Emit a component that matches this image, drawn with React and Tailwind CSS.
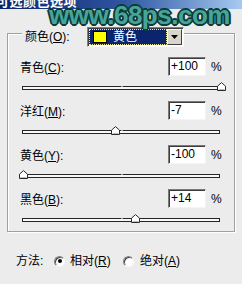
const font = "font-['Liberation_Sans','Noto_Sans_CJK_SC',sans-serif]"

const rows = [
  { label: '青色', key: 'C', value: '+100', pos: 100 },
  { label: '洋红', key: 'M', value: '-7', pos: -7 },
  { label: '黄色', key: 'Y', value: '-100', pos: -100 },
  { label: '黑色', key: 'B', value: '+14', pos: 14 },
]

function Label({ text, k }) {
  return (
    <span className="text-[12px] leading-[14px] text-black whitespace-nowrap">
      {text}(<span className="underline underline-offset-[1px]">{k}</span>):
    </span>
  )
}

function Thumb({ left }) {
  return (
    <svg
      width="9"
      height="9"
      viewBox="0 0 9 9"
      className="absolute top-[-5px]"
      style={{ left }}
    >
      <path d="M0.5 8.5V4.2L4.5 0.6L8.5 4.2V8.5Z" fill="#fff" stroke="#2a2a2a" />
      <path d="M1.5 7.5H7.5" stroke="#bdbdbd" />
    </svg>
  )
}

function Row({ row, first }) {
  const left = ((row.pos + 100) / 200) * 198 - 4.5
  return (
    <div className={first ? 'mt-[10px]' : 'mt-[11px]'}>
      <div className="flex items-center h-[19px] pl-[12px]">
        <div className="flex-1">
          <Label text={row.label} k={row.key} />
        </div>
        <div className="w-[38px] h-[19px] bg-white border-t border-l border-[#7a7a7a] border-r border-b border-r-[#f4f4f4] border-b-[#f4f4f4] shadow-[inset_1px_1px_0_#3c3c3c] pl-[2px] text-[12px] leading-[17px] text-black">
          {row.value}
        </div>
        <div className="w-[28px] pl-[5px] text-[12px] leading-[14px] text-black">%</div>
      </div>
      <div className="relative ml-[14px] mt-[10px] w-[198px] h-[4px] border border-[#262626] bg-[#f8f8f8]">
        <div className="absolute left-[98px] top-[-1px] w-[2px] h-[1px] bg-[#9a9a9a]" />
        <Thumb left={left} />
      </div>
    </div>
  )
}

function Radio({ on }) {
  return (
    <span className="relative w-[11px] h-[11px] rounded-full bg-white border border-t-[#808080] border-l-[#808080] border-r-[#f6f6f6] border-b-[#f6f6f6] shadow-[inset_1px_1px_0_#404040] flex items-center justify-center">
      {on && <span className="w-[4px] h-[4px] rounded-full bg-black" />}
    </span>
  )
}

export default function App() {
  return (
    <div className={`relative w-[242px] h-[284px] overflow-hidden bg-[#ececec] ${font}`}>
      {/* title bar */}
      <div className="h-[9px] overflow-hidden bg-gradient-to-r from-[#0a246a] via-[#2f54a0] to-[#a6caf0]">
        <div className="-mt-[6px] -ml-[4px] text-[13px] leading-[15px] font-bold text-white tracking-[0.5px]">
          可选颜色选项
        </div>
      </div>

      {/* watermark */}
      <div className="absolute left-[49px] top-[0px] text-[26px] leading-[30px] font-bold tracking-[-0.5px] text-[#46a59a] font-['Liberation_Sans',sans-serif] [text-shadow:1px_1px_0_#0d3b36,-1px_-1px_0_#0d3b36,1px_-1px_0_#0d3b36,-1px_1px_0_#0d3b36,2px_0_0_#0d3b36,-2px_0_0_#0d3b36,0_2px_0_#0d3b36,0_-2px_0_#0d3b36]">
        www.68ps.com
      </div>

      {/* group box */}
      <div className="mt-[24px] mx-[7px] h-[199px] border border-[#a0a0a0] shadow-[inset_1px_1px_0_#fff,1px_1px_0_#fff]">
        <div className="-mt-[7px] flex items-center h-[20px] pl-[14px]">
          <div className="w-[65px] bg-[#ececec] pl-[3px] flex items-center h-[14px]">
            <Label text="颜色" k="O" />
          </div>
          <div className="w-[97px] h-[20px] border border-t-[#808080] border-l-[#808080] border-r-[#fafafa] border-b-[#fafafa] shadow-[inset_1px_1px_0_#404040] bg-white flex p-[1px]">
            <div className="flex-1 bg-[#0b246e] outline outline-1 outline-dotted outline-[#e8e8a0] -outline-offset-1 flex items-center pl-[4px]">
              <span className="w-[14px] h-[12px] bg-[#ffff00] border border-black" />
              <span className="ml-[6px] text-[12px] leading-[14px] text-white">黄色</span>
            </div>
            <div className="w-[15px] bg-[#d8d5cc] border border-t-[#f8f8f8] border-l-[#f8f8f8] border-r-[#404040] border-b-[#404040] flex items-center justify-center">
              <svg width="7" height="4" viewBox="0 0 7 4">
                <path d="M0 0H7L3.5 4Z" fill="#000" />
              </svg>
            </div>
          </div>
        </div>

        {rows.map((row, i) => (
          <Row key={row.key} row={row} first={i === 0} />
        ))}
      </div>

      {/* method */}
      <div className="mt-[22px] flex items-center h-[14px] pl-[16px] text-[12px] leading-[14px] text-black">
        <span className="w-[38px]">方法:</span>
        <Radio on />
        <span className="ml-[5px] w-[53px]">
          相对(<span className="underline underline-offset-[1px]">R</span>)
        </span>
        <Radio />
        <span className="ml-[6px]">
          绝对(<span className="underline underline-offset-[1px]">A</span>)
        </span>
      </div>
    </div>
  )
}
